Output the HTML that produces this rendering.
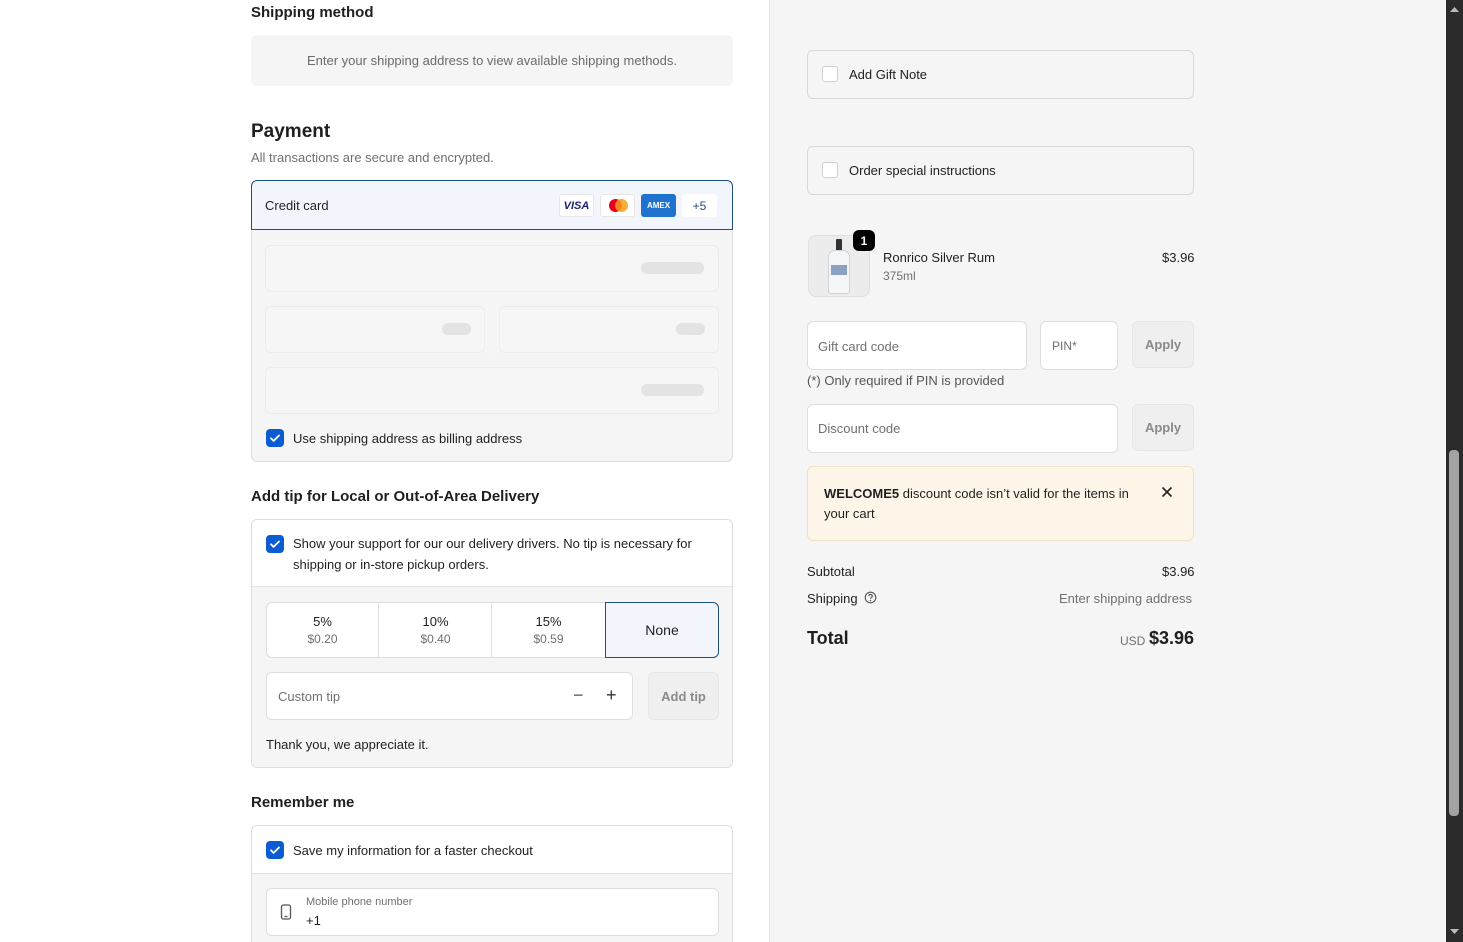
<!DOCTYPE html>
<html style="overflow:hidden;height:942px"><head><meta charset="utf-8"><style>
*{box-sizing:border-box;margin:0;padding:0}
body{width:1463px;height:942px;overflow:hidden;position:relative;font-family:"Liberation Sans",sans-serif;font-size:13px;color:#1f1f1f;background:#fff}
.a{position:absolute}
.right{left:769px;top:0;width:677px;height:942px;background:#f5f5f5;border-left:1px solid #e3e3e3}
.sb{left:1446px;top:0;width:17px;height:942px;background:#2b2b2b}
.inp{background:#fff;border:1px solid #dedede;border-radius:6px}
.ph{color:#707070}
.cb{width:18px;height:18px;border-radius:4px;background:#0b5bd3;display:flex;align-items:center;justify-content:center}
.cbe{width:16px;height:16px;border-radius:3px;background:#fff;border:1px solid #cfcfcf}
.pill{background:#e3e3e3;border-radius:8px;height:12px}
.h2{font-size:15px;font-weight:bold;color:#1f1f1f}
.btn{background:#efefef;border:1px solid #e6e6e6;border-radius:6px;color:#8a8a8a;font-weight:bold;font-size:13px;display:flex;align-items:center;justify-content:center}
</style></head><body>
<svg width="0" height="0" style="position:absolute"><defs><symbol id="ck" viewBox="0 0 18 18"><path d="M5 9.3l2.6 2.6L13 6.5" fill="none" stroke="#fff" stroke-width="1.8" stroke-linecap="round" stroke-linejoin="round"/></symbol></defs></svg>

<div class="a h2" style="left:251px;top:4px">Shipping method</div>
<div class="a" style="left:251px;top:35px;width:482px;height:51px;background:#f5f5f5;border-radius:6px;display:flex;align-items:center;justify-content:center;color:#6b6b6b">Enter your shipping address to view available shipping methods.</div>

<div class="a" style="left:251px;top:121px;font-size:19px;font-weight:bold">Payment</div>
<div class="a" style="left:251px;top:150px;color:#707070">All transactions are secure and encrypted.</div>

<div class="a" style="left:251px;top:180px;width:482px;height:282px;border:1px solid #dedede;border-radius:6px;background:#f5f5f5;overflow:hidden">
 <div class="a inp" style="left:13px;top:64px;width:454px;height:47px;background:#f6f6f6;border-color:#ececec"></div><div class="a pill" style="left:389px;top:81px;width:63px"></div>
 <div class="a inp" style="left:13px;top:125px;width:220px;height:47px;background:#f6f6f6;border-color:#ececec"></div><div class="a pill" style="left:190px;top:142px;width:29px"></div>
 <div class="a inp" style="left:247px;top:125px;width:220px;height:47px;background:#f6f6f6;border-color:#ececec"></div><div class="a pill" style="left:424px;top:142px;width:29px"></div>
 <div class="a inp" style="left:13px;top:186px;width:454px;height:47px;background:#f6f6f6;border-color:#ececec"></div><div class="a pill" style="left:389px;top:203px;width:63px"></div>
 <div class="a cb" style="left:14px;top:248px"><svg width="18" height="18"><use href="#ck"/></svg></div>
 <div class="a" style="left:41px;top:250px">Use shipping address as billing address</div>
</div>
<div class="a" style="left:251px;top:180px;width:482px;height:50px;background:#f2f6fc;border:1px solid #1c4e80;border-radius:6px 6px 0 0"></div>
<div class="a" style="left:265px;top:198px">Credit card</div>
<div class="a" style="left:559px;top:194px;width:35px;height:23px;background:#fff;border:1px solid #e6e6e6;border-radius:3px;font-weight:bold;font-style:italic;color:#1a1f71;font-size:11px;display:flex;align-items:center;justify-content:center">VISA</div>
<div class="a" style="left:600px;top:194px;width:35px;height:23px;background:#fff;border:1px solid #e6e6e6;border-radius:3px"><div class="a" style="left:8px;top:4px;width:13px;height:13px;border-radius:50%;background:#eb001b"></div><div class="a" style="left:14px;top:4px;width:13px;height:13px;border-radius:50%;background:#f79e1b;opacity:.85"></div></div>
<div class="a" style="left:641px;top:194px;width:35px;height:23px;background:#1f72cd;border-radius:3px;color:#fff;font-size:8px;font-weight:bold;display:flex;align-items:center;justify-content:center">AMEX</div>
<div class="a" style="left:682px;top:194px;width:35px;height:23px;background:#fff;border-radius:3px;color:#1c4e80;font-size:12px;display:flex;align-items:center;justify-content:center">+5</div>

<div class="a h2" style="left:251px;top:488px">Add tip for Local or Out-of-Area Delivery</div>
<div class="a" style="left:251px;top:519px;width:482px;height:249px;border:1px solid #dedede;border-radius:6px;background:#f5f5f5;overflow:hidden">
 <div class="a" style="left:0;top:0;width:480px;height:67px;background:#fff;border-bottom:1px solid #e3e3e3"></div>
 <div class="a cb" style="left:14px;top:15px"><svg width="18" height="18"><use href="#ck"/></svg></div>
 <div class="a" style="left:41px;top:13px;width:430px;line-height:21px">Show your support for our our delivery drivers. No tip is necessary for shipping or in-store pickup orders.</div>
 <div class="a inp" style="left:14px;top:82px;width:453px;height:56px"></div>
 <div class="a" style="left:126px;top:83px;width:1px;height:54px;background:#e3e3e3"></div>
 <div class="a" style="left:239px;top:83px;width:1px;height:54px;background:#e3e3e3"></div>
 <div class="a" style="left:14px;top:93px;width:113px;text-align:center;line-height:17px">5%<br><span style="color:#707070;font-size:12px">$0.20</span></div>
 <div class="a" style="left:127px;top:93px;width:113px;text-align:center;line-height:17px">10%<br><span style="color:#707070;font-size:12px">$0.40</span></div>
 <div class="a" style="left:240px;top:93px;width:113px;text-align:center;line-height:17px">15%<br><span style="color:#707070;font-size:12px">$0.59</span></div>
 <div class="a" style="left:353px;top:82px;width:114px;height:56px;background:#f2f6fc;border:1px solid #1c4e80;border-radius:0 6px 6px 0;display:flex;align-items:center;justify-content:center;font-size:14px">None</div>
 <div class="a inp" style="left:14px;top:152px;width:367px;height:48px"></div>
 <div class="a ph" style="left:26px;top:169px">Custom tip</div>
 <div class="a" style="left:321px;top:165px;font-size:18px;color:#555">−</div>
 <div class="a" style="left:354px;top:165px;font-size:18px;color:#333">+</div>
 <div class="a btn" style="left:396px;top:152px;width:71px;height:48px">Add tip</div>
 <div class="a" style="left:14px;top:217px">Thank you, we appreciate it.</div>
</div>

<div class="a h2" style="left:251px;top:794px">Remember me</div>
<div class="a" style="left:251px;top:825px;width:482px;height:117px;border:1px solid #dedede;border-bottom:none;border-radius:6px 6px 0 0;background:#f5f5f5;overflow:hidden">
 <div class="a" style="left:0;top:0;width:480px;height:48px;background:#fff;border-bottom:1px solid #e3e3e3"></div>
 <div class="a cb" style="left:14px;top:15px"><svg width="18" height="18"><use href="#ck"/></svg></div>
 <div class="a" style="left:41px;top:17px">Save my information for a faster checkout</div>
 <div class="a inp" style="left:14px;top:62px;width:453px;height:48px"></div>
 <svg class="a" style="left:28px;top:78px" width="12" height="16" viewBox="0 0 12 16"><rect x="1.5" y="1" width="9" height="14" rx="2" fill="none" stroke="#555" stroke-width="1.3"/><path d="M4.5 12.5h3" stroke="#555" stroke-width="1.2"/></svg>
 <div class="a ph" style="left:54px;top:70px;font-size:11px">Mobile phone number</div>
 <div class="a" style="left:54px;top:87px">+1</div>
</div>

<div class="a right"></div>
<div class="a inp" style="left:807px;top:50px;width:387px;height:49px;background:#f5f5f5;border-color:#d9d9d9"></div>
<div class="a cbe" style="left:822px;top:66px"></div><div class="a" style="left:849px;top:67px">Add Gift Note</div>
<div class="a inp" style="left:807px;top:146px;width:387px;height:49px;background:#f5f5f5;border-color:#d9d9d9"></div>
<div class="a cbe" style="left:822px;top:162px"></div><div class="a" style="left:849px;top:163px">Order special instructions</div>

<div class="a" style="left:808px;top:235px;width:62px;height:62px;background:#ececec;border:1px solid #e0e0e0;border-radius:8px;overflow:hidden">
 <div class="a" style="left:27px;top:3px;width:6px;height:12px;background:#333;border-radius:1px"></div>
 <div class="a" style="left:19px;top:14px;width:22px;height:44px;background:#f4f6f8;border:1px solid #cdd3da;border-radius:7px 7px 3px 3px"></div>
 <div class="a" style="left:22px;top:29px;width:16px;height:10px;background:#8aa2bf"></div>
</div>
<div class="a" style="left:853px;top:230px;width:22px;height:21px;background:#000;color:#fff;border-radius:6px;font-weight:bold;font-size:12px;display:flex;align-items:center;justify-content:center">1</div>
<div class="a" style="left:883px;top:250px">Ronrico Silver Rum</div>
<div class="a" style="left:883px;top:269px;color:#707070;font-size:12px">375ml</div>
<div class="a" style="left:1162px;top:250px">$3.96</div>

<div class="a inp" style="left:807px;top:321px;width:220px;height:49px"></div><div class="a ph" style="left:818px;top:339px">Gift card code</div>
<div class="a inp" style="left:1040px;top:321px;width:78px;height:49px"></div><div class="a ph" style="left:1052px;top:339px;font-size:12px">PIN*</div>
<div class="a btn" style="left:1132px;top:321px;width:62px;height:47px">Apply</div>
<div class="a" style="left:807px;top:373px;color:#555">(*) Only required if PIN is provided</div>
<div class="a inp" style="left:807px;top:404px;width:311px;height:49px"></div><div class="a ph" style="left:818px;top:421px">Discount code</div>
<div class="a btn" style="left:1132px;top:404px;width:62px;height:47px">Apply</div>

<div class="a" style="left:807px;top:466px;width:387px;height:75px;background:#fdf5e8;border:1px solid #f1e2c6;border-radius:6px"></div>
<div class="a" style="left:824px;top:484px;width:320px;line-height:20px"><b>WELCOME5</b> discount code isn’t valid for the items in your cart</div>
<svg class="a" style="left:1161px;top:486px" width="12" height="12" viewBox="0 0 12 12"><path d="M1.5 1.5l9 9M10.5 1.5l-9 9" stroke="#222" stroke-width="1.6"/></svg>

<div class="a" style="left:807px;top:564px">Subtotal</div><div class="a" style="left:1162px;top:564px">$3.96</div>
<div class="a" style="left:807px;top:591px">Shipping</div>
<svg class="a" style="left:864px;top:591px" width="13" height="13" viewBox="0 0 13 13"><circle cx="6.5" cy="6.5" r="5.3" fill="none" stroke="#555" stroke-width="1.1"/><path d="M4.8 5.2a1.7 1.7 0 1 1 2.4 1.5c-.5.3-.7.6-.7 1.1" fill="none" stroke="#555" stroke-width="1.1"/><circle cx="6.5" cy="9.6" r=".7" fill="#555"/></svg>
<div class="a" style="left:1059px;top:591px;color:#707070">Enter shipping address</div>
<div class="a" style="left:807px;top:628px;font-size:18px;font-weight:bold">Total</div>
<div class="a" style="left:1120px;top:634px;font-size:12px;color:#707070">USD</div>
<div class="a" style="left:1149px;top:628px;font-size:18px;font-weight:bold">$3.96</div>

<div class="a sb"></div>
<div class="a" style="left:1449px;top:450px;width:10px;height:366px;background:#a3a3a3;border-radius:4px"></div>
<svg class="a" style="left:1448px;top:5px" width="13" height="8"><path d="M2 7l4.5-5 4.5 5z" fill="#bbb"/></svg>
<svg class="a" style="left:1448px;top:928px" width="13" height="8"><path d="M2 1l4.5 5 4.5-5z" fill="#bbb"/></svg>
</body></html>
